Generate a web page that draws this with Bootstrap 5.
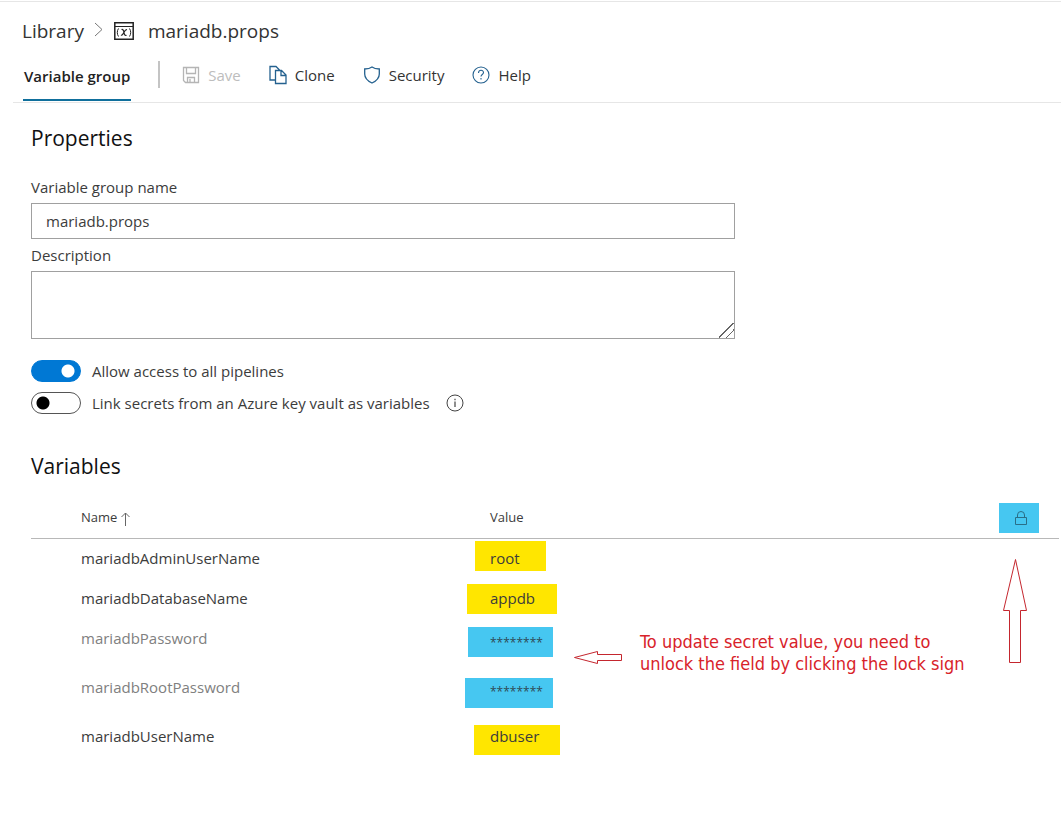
<!DOCTYPE html>
<html lang="en">
<head>
<meta charset="utf-8">
<meta name="viewport" content="width=device-width, initial-scale=1">
<title>mariadb.props - Library</title>
<link href="https://cdn.jsdelivr.net/npm/bootstrap@5.3.0/dist/css/bootstrap.min.css" rel="stylesheet">
<style>
  body { font-family: "Open Sans", "Noto Sans", sans-serif; font-size: 15px; line-height: 24px; color: #3c3c3c; background: #fff; }
  .page-top { border-top: 1px solid #e6e6e6; margin-top: 1px; }
  .crumbs { font-size: 19px; line-height: 28px; padding: 15px 22px 0; color: #333; }
  .crumbs a { color: inherit; }
  .crumbs h1 { font-size: 19px; line-height: 28px; font-weight: 400; margin-left: 14px; }
  .toolbar { margin-left: 13px; padding-left: 10px; border-bottom: 1px solid #e6e6e6; height: 58px; }
  .toolbar .tab-link { color: #222; font-weight: 600; font-size: 15px; padding: 20px 1px 11px; border-bottom: 2px solid #0f6f9c; line-height: 24px; margin-bottom: 1px; }
  .divider { width: 2px; height: 27px; background: #c4c4c4; margin: 2px 22px 0 27px; }
  .tools { gap: 28px; padding-top: 2px; }
  .tool { color: #333; font-size: 15px; line-height: 24px; }
  .tool svg { color: #24618f; }
  .tool:disabled { color: #bdbdbd; opacity: 1; border: 0; }
  .tool:disabled svg { color: #b5b5b5; }
  .content-area { padding: 20px 2px 40px 31px; }
  h2 { font-size: 21px; line-height: 30px; color: #111; }
  .section-title { padding-bottom: 22px; }
  .fields { max-width: 704px; }
  .field { border: 1px solid #a0a0a0; border-radius: 0; font-size: 15px; color: #3c3c3c; padding: 5px 14px; height: 36px; }
  textarea.field { height: 68px; }
  textarea.field::-webkit-resizer { background: linear-gradient(135deg, transparent 46%, #666 46%, #666 51%, transparent 51%, transparent 70%, #666 70%, #666 75%, transparent 75%); }
  .toggle-row { height: 32px; }
  .toggle-row .form-check-input { width: 50px; height: 22px; margin: 0 11px 0 0; border: 1px solid #555; background: radial-gradient(circle at 11px 10px, #000 6px, transparent 7px); box-shadow: none; }
  .toggle-row .form-check-input:checked { border-color: #0078d4; background: radial-gradient(circle at 36px 10px, #fff 6px, #0078d4 7px); }
  .var-table { table-layout: fixed; color: #3c3c3c; --bs-table-bg: transparent; position: relative; }
  .var-table th { font-size: 13px; font-weight: 400; line-height: 24px; padding: 8px 0 9px; border-bottom: 1px solid #b8b8b8; color: #3c3c3c; }
  .var-table td { padding: 7px 0 8px; border: 0; height: 40px; line-height: 24px; color: #3c3c3c; }
  .var-table .secret td { height: 49px; color: #808080; }
  .var-table .secret td.masked { font-size: 12px; line-height: 34px; color: #2f4a55; }
  .col-check { width: 50px; }
  .col-name { width: 409px; }
  .col-lock { width: 60px; }
  .lock-btn { background: #46c7f1; color: #2a6f88; width: 40px; height: 30px; padding: 0 0 0 4px; border: 0; }
  .marks { left: 430px; top: 40px; }
  .arrow-up { right: 30px; top: 61px; }
  .note { left: 609px; top: 134px; color: #d8232a; font-family: "DejaVu Sans Condensed", "DejaVu Sans", sans-serif; font-size: 18px; line-height: 22px; }
</style>
</head>
<body>
<header class="page-top">
  <nav class="crumbs d-flex align-items-center" aria-label="Breadcrumb">
    <a href="#" class="text-decoration-none">Library</a>
    <svg class="ms-2 me-2" width="14" height="18" viewBox="1 0 14 18" fill="none" stroke="#777" aria-hidden="true"><path d="M4 1l7 6.500-7 6.500"/></svg>
    <svg width="20" height="18" viewBox="0 0 20 18" fill="none" stroke="#222" aria-hidden="true"><path stroke-width="1.500" d="M.8.800h18.400v16.400H.8z"/><path d="M1 4.500h18"/><path d="M4.500 6.500c-1.600 2.300-1.600 5.700 0 8M15.500 6.500c1.600 2.300 1.600 5.700 0 8" /><path stroke-width="1.200" d="M7.500 7.500c1.500-.5 2.200 1 2.500 3s.9 3.500 2.500 2.700M13 7.700c-1.300-.4-2.300 1.300-3 2.500s-1.600 3.500-3 2.700"/></svg>
    <h1 class="mb-0">mariadb.props</h1>
  </nav>
  <div class="toolbar d-flex align-items-center">
    <a href="#" class="tab-link text-decoration-none align-self-end">Variable group</a>
    <span class="divider"></span>
    <div class="tools d-flex">
      <button type="button" class="tool btn p-0 border-0 d-flex align-items-center gap-2" disabled>
        <svg width="18" height="18" viewBox="0 0 18 18" fill="none" stroke="currentColor" stroke-width="1.300" aria-hidden="true"><path d="M1.500 1.500h15v15h-13l-2-2zM4.500 1.500v6h9v-6M5.500 16.500v-5h7v5M8 13v3"/></svg><span>Save</span></button>
      <button type="button" class="tool btn p-0 border-0 d-flex align-items-center gap-2">
        <svg width="18" height="20" viewBox="0 0 18 20" fill="none" stroke="currentColor" stroke-width="1.300" aria-hidden="true"><path d="M6 15H1V1.500h6L10.500 5M6.500 5.500h6l4.500 4.500v8.500H6.500zM12 5.500v5h5"/></svg><span>Clone</span></button>
      <button type="button" class="tool btn p-0 border-0 d-flex align-items-center gap-2">
        <svg width="18" height="18" viewBox="0 0 18 18" fill="none" stroke="currentColor" stroke-width="1.300" aria-hidden="true"><path d="M9 1C7 2.500 4.500 3 1.700 3v5c0 4 3 7 7.300 9 4.300-2 7.300-5 7.300-9V3C13.500 3 11 2.500 9 1z"/></svg><span>Security</span></button>
      <button type="button" class="tool btn p-0 border-0 d-flex align-items-center gap-2">
        <svg width="18" height="18" viewBox="0 0 18 18" fill="none" stroke="currentColor" stroke-width="1.100" aria-hidden="true"><circle cx="9" cy="9" r="8"/><path d="M6.500 7c0-3.500 5-3.500 5-.5 0 2-2.500 2-2.500 4M9 12v1.500"/></svg><span>Help</span></button>
    </div>
  </div>
</header>
<main class="content-area">
  <section class="fields">
    <h2 class="section-title mb-0">Properties</h2>
    <div class="mb-1">
      <label class="d-block pb-1" for="groupName">Variable group name</label>
      <input id="groupName" type="text" class="field form-control" value="mariadb.props">
    </div>
    <div>
      <label class="d-block pb-1" for="groupDescription">Description</label>
      <textarea id="groupDescription" class="field form-control"></textarea>
    </div>
    <div class="pt-3">
      <div class="toggle-row d-flex align-items-center form-switch p-0">
        <input id="allowAccess" class="form-check-input" type="checkbox" role="switch" checked>
        <label for="allowAccess">Allow access to all pipelines</label>
      </div>
      <div class="toggle-row d-flex align-items-center form-switch p-0">
        <input id="linkSecrets" class="form-check-input" type="checkbox" role="switch">
        <label for="linkSecrets">Link secrets from an Azure key vault as variables</label>
        <svg class="ms-3" width="18" height="18" viewBox="0 0 18 18" fill="none" stroke="#444" aria-hidden="true"><circle cx="9" cy="9" r="8"/><path stroke-width="1.200" d="M9 7.500v5.500M9 4.800v1.400"/></svg>
      </div>
    </div>
  </section>
  <section>
    <h2 class="mb-0 mt-3 pt-3">Variables</h2>
    <div class="position-relative mt-3">
      <svg class="marks position-absolute" width="200" height="230" aria-hidden="true">
        <g fill="#ffe600"><path d="M14 4h71v30H14zM6 47h90v30H6zM13 188h86v30H13z"/></g>
        <g fill="#46c7f1"><path d="M7 90h85v30H7zM4 141h88v30H4z"/></g>
        <path fill="none" stroke="#c4262e" d="M113.500 120.500l23-6v3h24v6h-24v3z"/>
      </svg>
      <table class="var-table table mb-0">
        <colgroup><col class="col-check"><col class="col-name"><col><col class="col-lock"></colgroup>
        <thead>
          <tr>
            <th></th>
            <th scope="col">Name <svg width="9" height="14" viewBox="0 0 9 14" fill="none" stroke="#666" aria-hidden="true"><path d="M4.500 14V1M.5 5l4-4 4 4"/></svg></th>
            <th scope="col">Value</th>
            <th class="p-0 align-middle" scope="col"><button type="button" class="lock-btn d-flex align-items-center justify-content-center" aria-label="Lock">
              <svg width="12" height="14" viewBox="0 0 12 14" fill="none" stroke="currentColor" aria-hidden="true"><path d="M.5 6.500h11v7H.5zM2.500 6.500V4a3.500 3.500 0 0 1 7 0v2.500"/></svg></button></th>
          </tr>
        </thead>
        <tbody>
          <tr><td></td><td>mariadbAdminUserName</td><td>root</td><td></td></tr>
          <tr><td></td><td>mariadbDatabaseName</td><td>appdb</td><td></td></tr>
          <tr class="secret"><td></td><td>mariadbPassword</td><td class="masked">********</td><td></td></tr>
          <tr class="secret"><td></td><td>mariadbRootPassword</td><td class="masked">********</td><td></td></tr>
          <tr><td></td><td>mariadbUserName</td><td>dbuser</td><td></td></tr>
        </tbody>
      </table>
      <svg class="arrow-up position-absolute" width="26" height="108" viewBox="0 0 26 108" fill="none" stroke="#c4262e" aria-hidden="true"><path d="M12.500 1.500l11 51h-6v52h-11v-52h-6z"/></svg>
      <p class="note position-absolute mb-0">To update secret value, you need to<br>unlock the field by clicking the lock sign</p>
    </div>
  </section>
</main>
<script src="https://cdn.jsdelivr.net/npm/bootstrap@5.3.0/dist/js/bootstrap.bundle.min.js"></script>
</body>
</html>
